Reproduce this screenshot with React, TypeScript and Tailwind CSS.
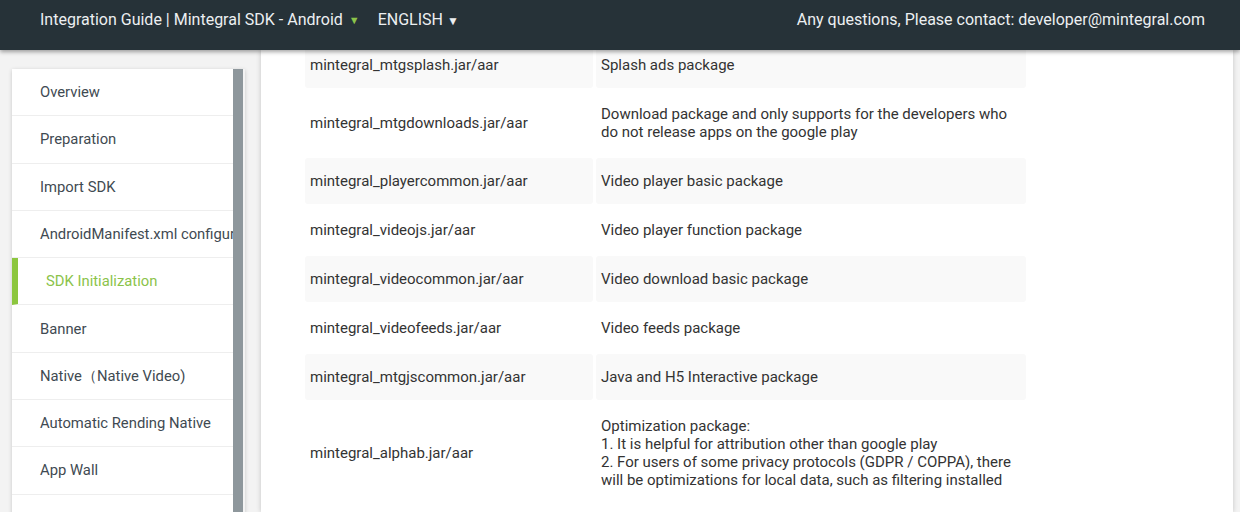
import React from "react";

const nav = [
  "Overview",
  "Preparation",
  "Import SDK",
  "AndroidManifest.xml configuration",
  "SDK Initialization",
  "Banner",
  "Native（Native Video)",
  "Automatic Rending Native",
  "App Wall",
  "",
];

const rows: [string, string[]][] = [
  ["mintegral_mtgsplash.jar/aar", ["Splash ads package"]],
  [
    "mintegral_mtgdownloads.jar/aar",
    ["Download package and only supports for the developers who do not release apps on the google play"],
  ],
  ["mintegral_playercommon.jar/aar", ["Video player basic package"]],
  ["mintegral_videojs.jar/aar", ["Video player function package"]],
  ["mintegral_videocommon.jar/aar", ["Video download basic package"]],
  ["mintegral_videofeeds.jar/aar", ["Video feeds package"]],
  ["mintegral_mtgjscommon.jar/aar", ["Java and H5 Interactive package"]],
  [
    "mintegral_alphab.jar/aar",
    [
      "Optimization package:",
      "1. It is helpful for attribution other than google play",
      "2. For users of some privacy protocols (GDPR / COPPA), there will be optimizations for local data, such as filtering installed",
    ],
  ],
];

export default function App() {
  return (
    <div
      className="h-[512px] w-[1240px] overflow-hidden flex flex-col bg-[#f3f3f3]"
      style={{ fontFamily: "Roboto, 'Liberation Sans', sans-serif" }}
    >
      <header className="relative z-20 h-[50px] shrink-0 bg-[#263238] shadow-[0_2px_4px_rgba(0,0,0,0.35)]">
        <div className="flex h-[40px] items-center justify-between pl-[40px] pr-[35px] text-[16px] text-[#eceff1]">
          <div className="flex items-center">
            <span>Integration Guide | Mintegral SDK - Android</span>
            <span className="ml-[6px] mt-[3px] text-[11px] text-[#8bc34a]">▼</span>
            <span className="ml-[18px]">ENGLISH</span>
            <span className="ml-[4px] mt-[1px] text-[12px]">▼</span>
          </div>
          <div>Any questions, Please contact: developer@mintegral.com</div>
        </div>
      </header>

      <div className="flex flex-1 min-h-0">
        <aside className="ml-[12px] mt-[19px] flex w-[233px] shrink-0 self-start shadow-[0_1px_4px_rgba(0,0,0,0.18)]">
          <ul className="w-[221px] bg-white">
            {nav.map((item, i) => {
              const active = item === "SDK Initialization";
              return (
                <li
                  key={i}
                  className={`flex h-[47.3px] items-center overflow-hidden whitespace-nowrap border-b border-[#eeeeee] text-[14.8px] ${
                    active
                      ? "border-l-[6px] border-l-[#8cc63f] pl-[28px] text-[#8bc34a]"
                      : "pl-[28px] text-[#3f4a52]"
                  }`}
                >
                  {item}
                </li>
              );
            })}
          </ul>
          <div className="w-[10px] bg-[#8e979c]" />
        </aside>

        <main className="relative ml-[16px] w-[972px] overflow-hidden bg-white shadow-[0_0_5px_rgba(0,0,0,0.2)]">
          <div className="mt-[-8px] ml-[44px] grid w-[721px] grid-cols-[288px_430px] gap-[3px] text-[15px] leading-[18px] text-[#333333]">
            {rows.map(([name, desc], i) => {
              const bg = i % 2 === 0 ? "bg-[#f9f9f9]" : "bg-white";
              return (
                <React.Fragment key={i}>
                  <div className={`flex items-center rounded-[3px] px-[5px] py-[14px] ${bg}`}>{name}</div>
                  <div className={`flex flex-col justify-center rounded-[3px] px-[5px] py-[14px] ${bg}`}>
                    {desc.map((d, j) => (
                      <div key={j}>{d}</div>
                    ))}
                  </div>
                </React.Fragment>
              );
            })}
          </div>
        </main>
      </div>
    </div>
  );
}
